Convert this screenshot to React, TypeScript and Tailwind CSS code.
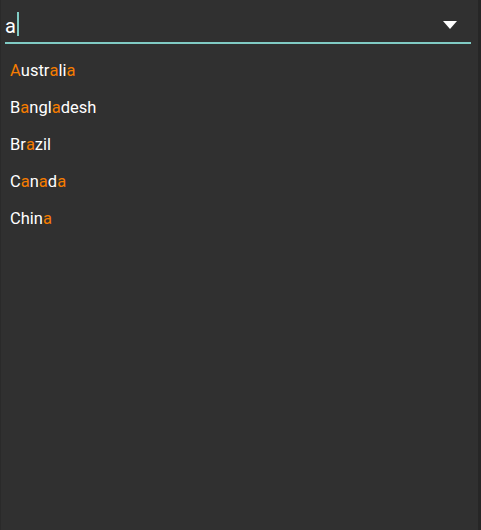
import React from "react";

const items = ["Australia", "Bangladesh", "Brazil", "Canada", "China"];

function Hl({ text }: { text: string }) {
  return (
    <>
      {text.split("").map((c, i) =>
        c.toLowerCase() === "a" ? (
          <span key={i} className="text-[#f57c00]">{c}</span>
        ) : (
          <span key={i}>{c}</span>
        )
      )}
    </>
  );
}

export default function App() {
  return (
    <div
      className="w-[481px] h-[530px] bg-[#303030] flex"
      style={{ fontFamily: "Roboto, sans-serif" }}
    >
      <div className="flex-1 flex flex-col border-l border-[#2a2a2a]">
        <div className="ml-[4px] mr-[7px] mt-[12px] h-[32px] border-b-2 border-[#80cbc4] flex items-start">
          <span className="text-white text-[20px] leading-[24px] mt-[2px]">a</span>
          <span className="w-[2px] h-[24px] bg-[#80cbc4] ml-[1px]" />
          <div className="flex-1" />
          <svg width="14" height="9" viewBox="0 0 14 9" className="mr-[14px] mt-[9px]">
            <path d="M0 0 H14 L7 8 Z" fill="#ffffff" />
          </svg>
        </div>
        <div className="flex flex-col mt-[9px]">
          {items.map((it) => (
            <div key={it} className="h-[37px] flex items-center pl-[9px] text-white text-[16.5px]">
              <Hl text={it} />
            </div>
          ))}
        </div>
      </div>
      <div className="w-[3px] bg-[#262626]" />
    </div>
  );
}
